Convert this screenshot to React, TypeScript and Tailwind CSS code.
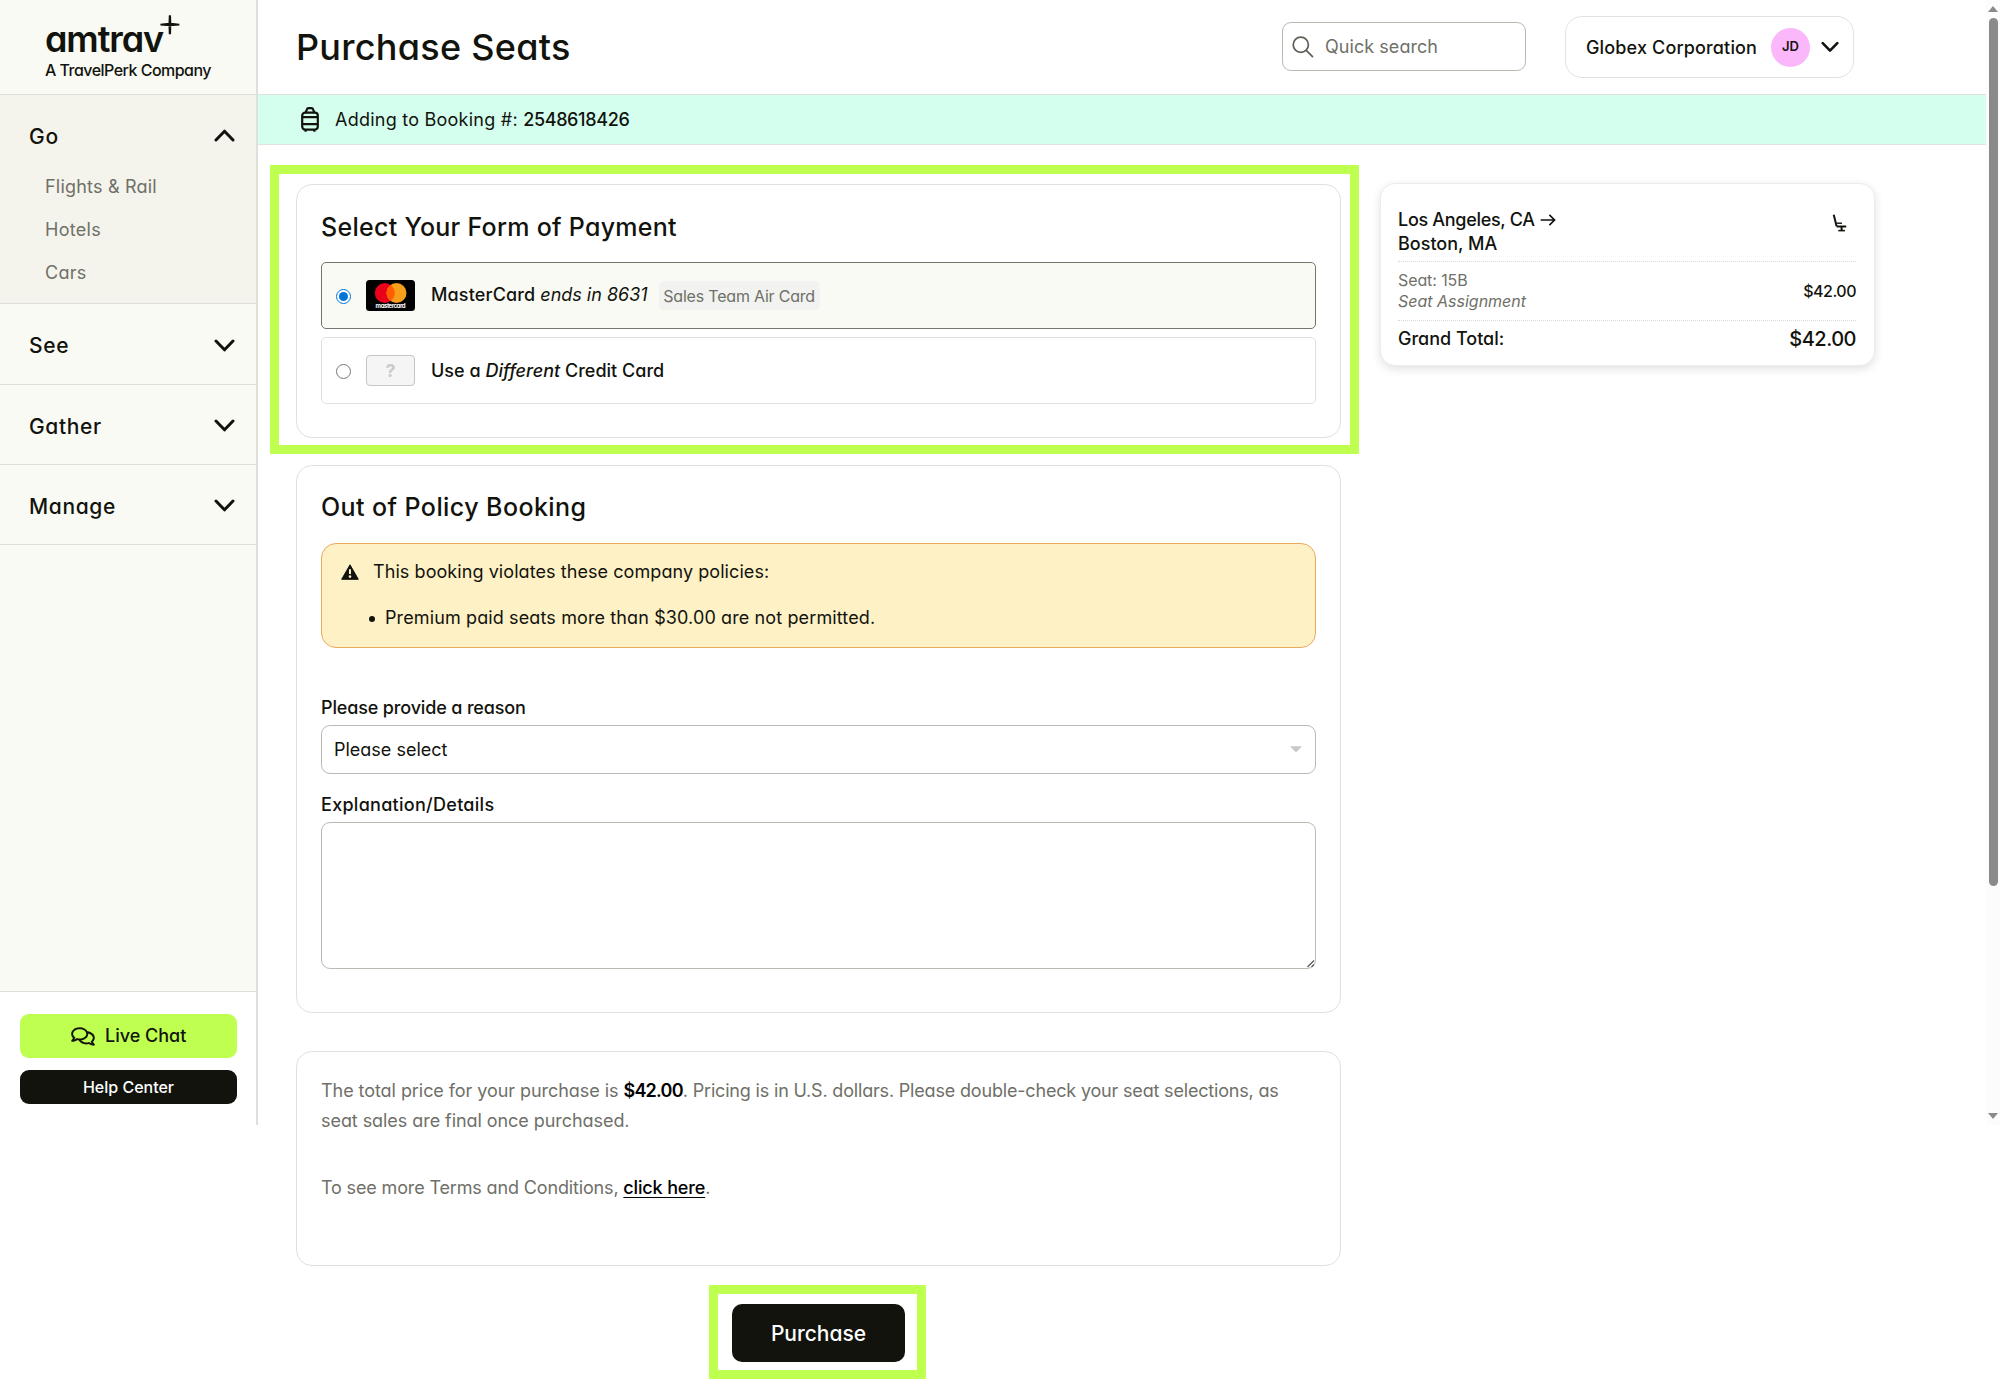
import React from 'react'
import { FaRegComments } from 'react-icons/fa'

function Chevron({ up = false, className = 'w-[21px] h-[13px]' }: { up?: boolean; className?: string }) {
  return (
    <svg viewBox="0 0 21 13" className={className} fill="none" stroke="#12130d" strokeWidth="3" strokeLinecap="round" strokeLinejoin="round">
      {up ? <path d="M2 11 10.5 2.2 19 11" /> : <path d="M2 2 10.5 10.8 19 2" />}
    </svg>
  )
}

function Spark() {
  return (
    <svg viewBox="0 0 20 20" className="absolute left-[160px] top-[15px] h-[20px] w-[20px]" fill="#12130d">
      <path d="M8.8 0.3h2.2l0.3 7.6h-2.8zM8.5 11.2h2.8l-0.3 8h-2.2z" />
      <path d="M0.4 8.7 7 8.1h6l6.4 0.6v1.7L13 11H7L0.4 10.4z" />
    </svg>
  )
}

function Luggage() {
  return (
    <svg viewBox="0 0 18 25" className="h-[25px] w-[18px]" fill="none" stroke="#12130d" strokeWidth="2.2">
      <path d="M4.5 6 5.8 2.6Q6.2 1.2 7.6 1.2h2.8Q11.8 1.2 12.2 2.6L13.5 6" />
      <rect x="1.2" y="5.6" width="15.6" height="17" rx="3" />
      <path d="M1.2 10.2h15.6M1.2 17.2h15.6" />
      <path d="M4.6 22.8v2M13.4 22.8v2" />
    </svg>
  )
}

function Seat() {
  return (
    <svg viewBox="0 0 15 18" className="h-[18px] w-[15px]" fill="none" stroke="#12130d">
      <path d="M1.7 0.8 4.6 12.3" strokeWidth="2" />
      <path d="M4.4 9.2H10" strokeWidth="1.4" />
      <path d="M4.6 12.5h9.6" strokeWidth="2" />
      <path d="M9.6 13v3.6" strokeWidth="2" />
      <path d="M6.3 16.6h6.6" strokeWidth="1.6" />
    </svg>
  )
}

function MasterCardLogo() {
  return (
    <svg viewBox="0 0 49 31" className="h-[31px] w-[49px]">
      <rect width="49" height="31" rx="3.5" fill="#000" />
      <circle cx="18.8" cy="13" r="10" fill="#eb001b" />
      <circle cx="30.5" cy="13" r="10" fill="#f79e1b" />
      <path d="M24.65 4.9a10 10 0 0 1 0 16.2 10 10 0 0 1 0-16.2z" fill="#ff5f00" />
      <text x="24.6" y="27.6" textAnchor="middle" textLength="30" fontSize="6" fontWeight="700" fill="#fff" fontFamily="Inter, sans-serif">
        mastercard
      </text>
    </svg>
  )
}

function Nav({ label, className }: { label: string; className: string }) {
  return (
    <div className={`flex items-center justify-between border-b border-[#dddfd8] pl-[29px] pr-[21px] pt-[3px] ${className}`}>
      <span className="pt-px text-[21px] font-medium leading-6 tracking-[0.65px]">{label}</span>
      <Chevron className="mb-px h-[13px] w-[21px]" />
    </div>
  )
}

function Sidebar() {
  return (
    <aside className="relative flex h-[1125px] w-[258px] shrink-0 flex-col border-r-2 border-[#dfe0d9] bg-[#f9faf4]">
      <div className="h-[95px] border-b border-[#dddfd8] pl-[45px] pt-[21px]">
        <div className="text-[36px] font-semibold leading-[36px] tracking-[-1.1px]">amtrav</div>
        <Spark />
        <div className="mt-[5px] text-[16px] leading-[17px] tracking-[-0.52px] [font-weight:450]">A TravelPerk Company</div>
      </div>
      <div className="h-[209px] border-b border-[#dddfd8] bg-[#f5f4ec] pt-[29px]">
        <div className="flex items-center justify-between pl-[29px] pr-[21px]">
          <span className="pt-px text-[21px] font-medium leading-6 tracking-[0.8px]">Go</span>
          <Chevron up className="mb-[2px] h-[13px] w-[21px]" />
        </div>
        <div className="mt-[16px] pl-[45px] text-[18px] text-[#6f7068]">
          <div className="leading-[43px] tracking-[0.2px]">Flights &amp; Rail</div>
          <div className="leading-[43px] tracking-[0.3px]">Hotels</div>
          <div className="leading-[43px] tracking-[0.3px]">Cars</div>
        </div>
      </div>
      <Nav label="See" className="h-[81px]" />
      <Nav label="Gather" className="h-[80px]" />
      <Nav label="Manage" className="h-[80px]" />
      <div className="flex-1" />
      <div className="h-[134px] border-t border-[#dddfd8] bg-white pl-[20px] pt-[22px]">
        <div className="flex h-[44px] w-[217px] items-center rounded-[9px] bg-[#beff50] pl-[51px]">
          <FaRegComments className="h-[21px] w-[24px]" />
          <span className="ml-[10px] text-[18px] font-medium leading-6">Live Chat</span>
        </div>
        <div className="mt-[12px] flex h-[34px] w-[217px] items-center justify-center rounded-[9px] bg-[#12130d] pb-px text-[16px] font-medium text-white">
          Help Center
        </div>
      </div>
    </aside>
  )
}

function Header() {
  return (
    <header className="flex h-[95px] items-start border-b border-[#e0e1da]">
      <h1 className="ml-[37px] mt-[27px] w-[987px] pl-px text-[36px] font-medium leading-[40px] tracking-[0.27px]">Purchase Seats</h1>
      <div className="mt-[22px] flex h-[49px] w-[244px] items-center rounded-[9px] border border-[#b9bab1] pl-[9px] text-[#6f7068]">
        <svg viewBox="0 0 22 22" className="h-[22px] w-[22px]" fill="none" stroke="#5f6058" strokeWidth="1.7" strokeLinecap="round">
          <circle cx="8.8" cy="8.8" r="7.6" />
          <path d="m14.2 14.4 6.3 6.3" />
        </svg>
        <span className="ml-[11px] pt-px text-[18px] leading-6 tracking-[0.05px]">Quick search</span>
      </div>
      <div className="ml-[39px] mt-[16px] flex h-[62px] w-[289px] items-center rounded-[17px] border border-[#e2e3dc] pl-[20px]">
        <span className="w-[185px] pt-px text-[18px] font-medium leading-6 tracking-[0.15px]">Globex Corporation</span>
        <span className="flex h-[39px] w-[39px] items-center justify-center rounded-full bg-[#fab8fb] text-[13px] font-semibold">JD</span>
        <Chevron className="ml-[11px] h-[12px] w-[18px]" />
      </div>
    </header>
  )
}

function Radio({ checked = false }: { checked?: boolean }) {
  return checked ? (
    <span className="flex h-[15px] w-[15px] items-center justify-center rounded-full border-[1.5px] border-[#0075d9] bg-white">
      <span className="h-[9px] w-[9px] rounded-full bg-[#0075d9]" />
    </span>
  ) : (
    <span className="block h-[15px] w-[15px] rounded-full border border-[#767676] bg-white" />
  )
}

function PaymentCard() {
  return (
    <section className="h-[254px] w-[1045px] rounded-[16px] border border-[#e0e1da] px-6 pt-[26px]">
      <h2 className="text-[25px] font-medium leading-8 tracking-[0.28px]">Select Your Form of Payment</h2>
      <div className="mt-[19px] flex h-[67px] items-center rounded-[5px] border border-[#74756d] bg-[#f9faf4] pl-[14px]">
        <div className="pt-[2px]"><Radio checked /></div>
        <div className="ml-[15px]"><MasterCardLogo /></div>
        <span className="ml-[16px] pb-px text-[18px] font-medium leading-6 tracking-[0.15px]">
          MasterCard <em className="font-normal tracking-normal">ends in 8631</em>
        </span>
        <span className="ml-[11px] flex h-[29px] w-[161px] items-center justify-center whitespace-nowrap rounded-[5px] bg-[#f2f3f0] text-[16px] tracking-[-0.2px] text-[#6f7068]">
          Sales Team Air Card
        </span>
      </div>
      <div className="mt-2 flex h-[67px] items-center rounded-[5px] border border-[#e0e1da] pl-[14px]">
        <div className="pt-[2px]"><Radio /></div>
        <span className="ml-[15px] flex h-[31px] w-[49px] items-center justify-center rounded-[4px] border-[1.5px] border-[#c6c6c6] bg-[#f5f5f5] text-[18px] font-bold text-[#cbcbcb]">
          ?
        </span>
        <span className="ml-[16px] text-[18px] font-medium leading-6 tracking-[0.01px]">
          Use a <em>Different</em> Credit Card
        </span>
      </div>
    </section>
  )
}

function PolicyCard() {
  return (
    <section className="ml-[26px] mt-[11px] h-[548px] w-[1045px] rounded-[16px] border border-[#e0e1da] px-6 pt-[25px]">
      <h2 className="text-[25px] font-medium leading-8 tracking-[0.42px]">Out of Policy Booking</h2>
      <div className="mt-5 h-[105px] rounded-[15px] border border-[#eba95c] bg-[#fef1c6] pl-[19px] pt-[16px] text-[18px]">
        <div className="flex items-center leading-6">
          <svg viewBox="0 0 18 16" className="mb-px h-4 w-[18px]">
            <path d="M9 0.8 17.3 15.3H0.7z" fill="#12130d" stroke="#12130d" strokeLinejoin="round" />
            <path d="M9 5.2v4.8" stroke="#fff1c6" strokeWidth="2" />
            <circle cx="9" cy="12.6" r="1.3" fill="#fff1c6" />
          </svg>
          <span className="ml-[14px] tracking-[0.07px]">This booking violates these company policies:</span>
        </div>
        <div className="mt-[22px] flex items-center leading-6">
          <span className="ml-[28px] mt-[2px] h-[6px] w-[6px] rounded-full bg-[#12130d]" />
          <span className="ml-[10px] tracking-[0.12px]">Premium paid seats more than $30.00 are not permitted.</span>
        </div>
      </div>
      <label className="mt-12 block text-[18px] font-medium leading-6 tracking-[-0.15px]">Please provide a reason</label>
      <div className="mt-[5px] flex h-[49px] items-center justify-between rounded-[9px] border border-[#b9bab1] pl-[12px] pr-[13px] text-[18px]">
        <span>Please select</span>
        <svg viewBox="0 0 12 7" className="h-[7px] w-3" fill="#c8c8c8">
          <path d="M0 0.3h12L6 6.6z" />
        </svg>
      </div>
      <label className="mt-[19px] block text-[18px] font-medium leading-6 tracking-[0.28px]">Explanation/Details</label>
      <div className="mt-[5px] flex h-[147px] items-end justify-end rounded-[9px] border border-[#b9bab1]">
        <svg viewBox="0 0 8 8" className="h-2 w-2" fill="none" stroke="#555" strokeWidth="1.2">
          <path d="M0.5 7 7 0.5M4.5 7 7 4.5" />
        </svg>
      </div>
    </section>
  )
}

function TermsCard() {
  return (
    <section className="ml-[26px] mt-[38px] h-[215px] w-[1045px] rounded-[16px] border border-[#e0e1da] px-6 pt-[24px] text-[18px] leading-[30px] text-[#6f7068]">
      <p className="whitespace-nowrap tracking-[-0.06px]">
        The total price for your purchase is <b className="font-semibold tracking-[-0.75px] text-black">$42.00</b>
        <span className="tracking-[-0.18px]">. Pricing is in U.S. dollars. Please double-check your seat selections, as</span>
        <br />
        seat sales are final once purchased.
      </p>
      <p className="mt-[37px] tracking-[-0.15px]">
        To see more Terms and Conditions, <a className="font-medium text-black underline underline-offset-[3px]">click here</a>.
      </p>
    </section>
  )
}

function Summary() {
  return (
    <section className="ml-[21px] mt-[38px] h-[183px] w-[495px] rounded-[15px] border border-[#ececec] bg-white pl-[17px] pr-[18px] pt-[24px] shadow-[0_3px_10px_rgba(0,0,0,0.12)]">
      <div className="flex h-[54px] items-start justify-between border-b border-dotted border-[#d9d9d9] text-[18px] font-medium">
        <div>
          <div className="flex items-center leading-6">
            <span className="tracking-[-0.3px]">Los Angeles, CA</span>
            <svg viewBox="0 0 17 13" className="ml-[5px] h-[12px] w-[16px]" fill="none" stroke="#12130d" strokeWidth="1.8">
              <path d="M0.5 6.5h15M10 1l5.6 5.5L10 12" />
            </svg>
          </div>
          <div className="leading-[23px]">Boston, MA</div>
        </div>
        <div className="mr-[9px] mt-[6px]"><Seat /></div>
      </div>
      <div className="flex h-[59px] items-center justify-between border-b border-dotted border-[#d9d9d9] text-[16px]">
        <div className="text-[#6f7068]">
          <div className="leading-[21px] tracking-[-0.1px]">Seat: 15B</div>
          <div className="italic leading-[21px]">Seat Assignment</div>
        </div>
        <span className="font-medium tracking-[-0.5px]">$42.00</span>
      </div>
      <div className="mt-[6px] flex items-center justify-between font-medium leading-6">
        <span className="text-[18px]">Grand Total:</span>
        <span className="text-[20px] tracking-[-0.5px]">$42.00</span>
      </div>
    </section>
  )
}

function Scrollbar() {
  return (
    <div className="flex h-[1125px] w-[14px] flex-col items-center bg-[#fcfcfc]">
      <svg viewBox="0 0 10 6" className="mt-[6px] h-[6px] w-[10px]" fill="#8a8a8a"><path d="M0 6 5 0l5 6z" /></svg>
      <div className="mt-[6px] h-[868px] w-[9px] rounded-full bg-[#8a8a8a]" />
      <div className="flex-1" />
      <svg viewBox="0 0 10 6" className="mb-[6px] h-[6px] w-[10px]" fill="#8a8a8a"><path d="M0 0 5 6l5-6z" /></svg>
    </div>
  )
}

export default function App() {
  return (
    <div className="flex h-[1400px] w-[2000px] overflow-hidden bg-white font-['Inter',sans-serif] text-[#12130d] [font-feature-settings:'cv11']">
      <Sidebar />
      <main className="w-[1728px] shrink-0">
        <Header />
        <div className="flex h-[50px] items-center border-b border-[#dde5dc] bg-[#d4ffee] pl-[43px] text-[18px]">
          <Luggage />
          <span className="ml-[16px] pb-px tracking-[0.24px]">
            Adding to Booking #: <b className="font-medium tracking-[-0.35px]">2548618426</b>
          </span>
        </div>
        <div className="flex items-start">
          <div className="ml-3 w-[1089px]">
            <div className="mt-5 h-[289px] w-[1089px] border-[9px] border-[#beff50] pl-[17px] pt-[10px]">
              <PaymentCard />
            </div>
            <PolicyCard />
            <TermsCard />
            <div className="ml-[439px] mt-[19px] h-[94px] w-[217px] border-[9px] border-[#beff50] pl-[14px] pt-[10px]">
              <button className="h-[58px] w-[173px] rounded-[10px] bg-[#12130d] pt-[2px] text-[21px] font-medium text-white">Purchase</button>
            </div>
          </div>
          <Summary />
        </div>
      </main>
      <Scrollbar />
    </div>
  )
}
